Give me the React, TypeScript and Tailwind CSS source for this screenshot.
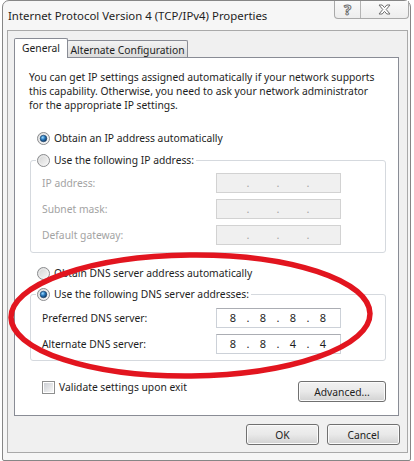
import React, { Fragment } from "react";

function Radio({ checked, id }: { checked?: boolean; id: string }) {
  return (
    <svg width="13" height="13" viewBox="0 0 13 13" className="shrink-0">
      <defs>
        <linearGradient id={`rg${id}`} x1="0" y1="0" x2="1" y2="1">
          <stop offset="0" stopColor="#cfcfcf" />
          <stop offset="1" stopColor="#fbfbfb" />
        </linearGradient>
        <radialGradient id={`rd${id}`} cx="0.38" cy="0.35" r="0.7">
          <stop offset="0" stopColor="#9fdcff" />
          <stop offset="0.45" stopColor="#2c7cc0" />
          <stop offset="1" stopColor="#0d2f57" />
        </radialGradient>
      </defs>
      <circle cx="6.5" cy="6.5" r="6" fill={`url(#rg${id})`} stroke="#8b8c8e" strokeWidth="1" />
      <circle cx="6.5" cy="6.5" r="4.6" fill="none" stroke="#f4f4f4" strokeWidth="0.8" opacity="0.8" />
      {checked && <circle cx="6.5" cy="6.5" r="3.3" fill={`url(#rd${id})`} stroke="#163e66" strokeWidth="0.6" />}
    </svg>
  );
}

function IpBox({ values, enabled }: { values?: string[]; enabled?: boolean }) {
  return (
    <div
      className={
        enabled
          ? "flex h-[20px] w-[125px] items-center border border-[#ccd1d8] border-t-[#abadb3] bg-white pl-[1px] text-[11px] text-[#1e1e1e]"
          : "flex h-[20px] w-[125px] items-center border border-[#d2d2d2] bg-[#f0f0f0] pl-[1px] text-[11px] text-[#a3a3a3]"
      }
    >
      {[0, 1, 2, 3].map((i) => (
        <Fragment key={i}>
          {i > 0 && <span className="flex w-0 justify-center">.</span>}
          <span className="w-[30px] text-center">{values ? values[i] : ""}</span>
        </Fragment>
      ))}
    </div>
  );
}

function Btn({ label, w }: { label: string; w: string }) {
  return (
    <div
      className={`${w} flex h-[21px] items-center justify-center rounded-[3px] border border-[#707070] bg-linear-to-b from-[#f2f2f2] via-[#e9e9e9] to-[#d2d2d2] text-[#1e1e1e] shadow-[inset_0_0_0_1px_#fbfbfb]`}
    >
      {label}
    </div>
  );
}

function Row({ label, enabled, values }: { label: string; enabled?: boolean; values?: string[] }) {
  return (
    <div className="flex h-[20px] items-center">
      <span className={enabled ? "w-[174px] text-[#1e1e1e]" : "w-[174px] text-[#a3a3a3]"}>{label}</span>
      <IpBox enabled={enabled} values={values} />
    </div>
  );
}

export default function App() {
  return (
    <div className="relative h-[461px] w-[414px] overflow-hidden bg-white font-['Noto_Sans',sans-serif] text-[10.3px] leading-[14px] text-[#1e1e1e]">
      {/* window frame */}
      <div className="ml-[2px] flex h-[461px] w-[409px] flex-col rounded-t-[7px] rounded-b-[2px] border border-[#868686] bg-[#f6f6f6]">
        {/* title bar */}
        <div className="flex h-[29px] items-start justify-between">
          <span className="self-center pl-[5px] text-[11.4px] text-[#1e1e1e]">
            Internet Protocol Version 4 (TCP/IPv4) Properties
          </span>
          <div className="mr-[1px] flex h-[18px] rounded-b-[4px] border-x border-b border-[#a9a9a9] bg-linear-to-b from-[#fafafa] to-[#ededed]">
            <div className="flex w-[26px] items-center justify-center border-r border-[#b4b4b4]">
              <span className="text-[15px] font-bold leading-none text-white [-webkit-text-stroke:1px_#6e6e6e]">?</span>
            </div>
            <div className="flex w-[47px] items-center justify-center">
              <svg width="13" height="11" viewBox="0 0 13 11">
                <path
                  d="M1 1 H4.2 L6.5 3.6 L8.8 1 H12 L8.2 5.5 L12 10 H8.8 L6.5 7.4 L4.2 10 H1 L4.8 5.5 Z"
                  fill="#ffffff"
                  stroke="#6e6e6e"
                  strokeWidth="1"
                  strokeLinejoin="round"
                />
              </svg>
            </div>
          </div>
        </div>

        {/* client area */}
        <div className="ml-[4px] flex h-[423px] w-[401px] flex-col border border-[#a9a9a9] bg-[#f0f0f0] pt-[7px]">
          {/* tabs */}
          <div className="flex h-[19px] items-end pl-[6px]">
            <div className="relative z-10 -mb-[1px] flex h-[20px] w-[54px] items-center justify-center rounded-t-[2px] border-x border-t border-[#898c95] bg-white pb-[1px]">
              General
            </div>
            <div className="-ml-[1px] flex h-[17px] w-[121px] items-center justify-center rounded-t-[2px] border-x border-t border-[#898c95] bg-linear-to-b from-[#f3f3f3] to-[#dcdcdc] pt-[1px]">
              Alternate Configuration
            </div>
          </div>

          {/* tab panel */}
          <div className="ml-[6px] flex h-[359px] w-[385px] flex-col border border-[#898c95] bg-white">
            <div className="pl-[14px] pt-[12px]">
              <span className="block">You can get IP settings assigned automatically if your network supports</span>
              <span className="block">this capability. Otherwise, you need to ask your network administrator</span>
              <span className="block">for the appropriate IP settings.</span>
            </div>

            <div className="mt-[18px] flex h-[16px] items-center gap-[4px] pl-[22px]">
              <Radio id="a" checked />
              <span>Obtain an IP address automatically</span>
            </div>

            <fieldset className="mt-[6px] ml-[15px] w-[356px] rounded-[3px] border border-[#d5d9de] pb-[7px]">
              <legend className="ml-[5px] flex h-[16px] items-center gap-[4px] pl-[1px] pr-[2px]">
                <Radio id="b" />
                <span>Use the following IP address:</span>
              </legend>
              <div className="flex flex-col gap-[6px] pl-[11px] pt-[5px]">
                <Row label="IP address:" />
                <Row label="Subnet mask:" />
                <Row label="Default gateway:" />
              </div>
            </fieldset>

            <div className="mt-[12px] flex h-[16px] items-center gap-[4px] pl-[22px]">
              <Radio id="c" />
              <span>Obtain DNS server address automatically</span>
            </div>

            <fieldset className="mt-[5px] ml-[15px] w-[356px] rounded-[3px] border border-[#d5d9de] pb-[6px]">
              <legend className="ml-[5px] flex h-[16px] items-center gap-[4px] pl-[1px] pr-[2px]">
                <Radio id="d" checked />
                <span>Use the following DNS server addresses:</span>
              </legend>
              <div className="flex flex-col gap-[6px] pl-[11px] pt-[6px]">
                <Row label="Preferred DNS server:" enabled values={["8", "8", "8", "8"]} />
                <Row label="Alternate DNS server:" enabled values={["8", "8", "4", "4"]} />
              </div>
            </fieldset>

            <div className="mt-[20px] flex items-start justify-between">
              <div className="flex items-center gap-[4px] pl-[27px]">
                <div className="flex h-[13px] w-[13px] items-center justify-center border border-[#8e8f8f] bg-white">
                  <div className="h-[9px] w-[9px] bg-linear-to-br from-[#cdd0d5] to-[#f7f7f7]" />
                </div>
                <span className="-mt-[1px]">Validate settings upon exit</span>
              </div>
              <div className="mr-[12px]">
                <Btn label="Advanced..." w="w-[88px]" />
              </div>
            </div>
          </div>

          {/* dialog buttons */}
          <div className="mt-[8px] flex justify-end gap-[8px] pr-[7px]">
            <Btn label="OK" w="w-[73px]" />
            <Btn label="Cancel" w="w-[73px]" />
          </div>
        </div>
      </div>

      {/* red annotation ellipse */}
      <svg
        className="pointer-events-none absolute left-0 top-0"
        width="414"
        height="461"
        viewBox="0 0 414 461"
      >
        <ellipse
          cx="190.5"
          cy="315.5"
          rx="179.5"
          ry="60.5"
          transform="rotate(-0.6 190.5 315.5)"
          fill="none"
          stroke="#e2151f"
          strokeWidth="5.5"
        />
      </svg>
    </div>
  );
}
